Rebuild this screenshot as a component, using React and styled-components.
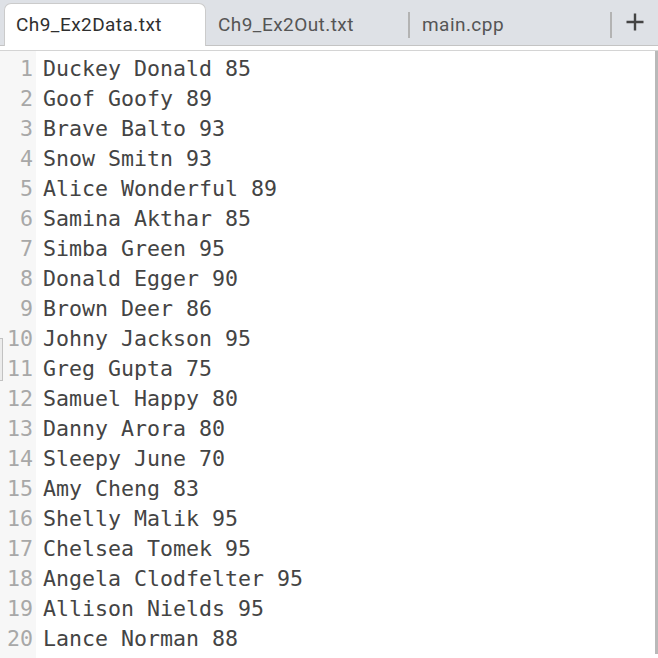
import React from 'react';
import styled, { createGlobalStyle } from 'styled-components';

const GlobalStyle = createGlobalStyle`
  html, body {
    margin: 0;
    padding: 0;
    background: #ffffff;
    overflow: hidden;
  }
`;

const Window = styled.div`
  width: 658px;
  height: 658px;
  display: flex;
  flex-direction: column;
  background: #ffffff;
`;

const TabBar = styled.div`
  height: 46px;
  flex-shrink: 0;
  background: #dee1e6;
  border-bottom: 1px solid #c4c4c4;
  display: flex;
  align-items: flex-end;
  padding-left: 4px;
  box-sizing: border-box;
  font-family: Roboto, "Liberation Sans", sans-serif;
`;

const Tab = styled.div`
  width: ${props => props.width}px;
  box-sizing: border-box;
  display: flex;
  align-items: center;
  padding-left: 11px;
  padding-bottom: 1px;
  font-size: 19px;
  letter-spacing: 0.45px;
  color: ${props => (props.active ? '#2f2f2f' : '#555555')};
  background: ${props => (props.active ? '#ffffff' : 'transparent')};
  border: 1px solid ${props => (props.active ? '#cbcbcb' : 'transparent')};
  border-bottom: none;
  border-radius: 7px 7px 0 0;
  margin-bottom: ${props => (props.active ? '-1px' : '0')};
  height: ${props => (props.active ? 43 : 42)}px;
`;

const Divider = styled.div`
  width: 2px;
  height: 26px;
  background: #b3b3b3;
  align-self: center;
  margin-top: 4px;
  flex-shrink: 0;
`;

const AddButton = styled.div`
  flex: 1;
  height: 46px;
  display: flex;
  align-items: center;
  justify-content: center;
  box-sizing: border-box;
`;

const Gap = styled.div`
  height: 4px;
  flex-shrink: 0;
  border-bottom: 1px solid #d4d4d4;
`;

const Editor = styled.div`
  flex: 1;
  display: flex;
  font-family: "DejaVu Sans Mono", monospace;
  font-size: 21.6px;
  line-height: 30px;
`;

const Gutter = styled.div`
  width: 36px;
  flex-shrink: 0;
  background: #f7f7f7;
  padding-top: 3px;
  position: relative;
`;

const Sash = styled.div`
  position: absolute;
  left: 0;
  top: 287px;
  width: 3px;
  height: 43px;
  box-sizing: border-box;
  border: 1px solid #c2c2c2;
  border-left: none;
  background: #ececec;
`;

const LineNumber = styled.div`
  text-align: right;
  padding-right: 3px;
  color: #a8a8a8;
  height: 30px;
`;

const Lines = styled.div`
  flex: 1;
  padding-top: 3px;
  padding-left: 7px;
  align-self: flex-start;
  border-right: 3px solid #b9b9b9;
`;

const Line = styled.div`
  color: #444444;
  height: 30px;
  white-space: pre;
`;

const rows = [
  'Duckey Donald 85',
  'Goof Goofy 89',
  'Brave Balto 93',
  'Snow Smitn 93',
  'Alice Wonderful 89',
  'Samina Akthar 85',
  'Simba Green 95',
  'Donald Egger 90',
  'Brown Deer 86',
  'Johny Jackson 95',
  'Greg Gupta 75',
  'Samuel Happy 80',
  'Danny Arora 80',
  'Sleepy June 70',
  'Amy Cheng 83',
  'Shelly Malik 95',
  'Chelsea Tomek 95',
  'Angela Clodfelter 95',
  'Allison Nields 95',
  'Lance Norman 88',
];

const App = () => {
  return (
    <>
      <GlobalStyle />
      <Window>
        <TabBar>
          <Tab active width={202}>Ch9_Ex2Data.txt</Tab>
          <Tab width={202}>Ch9_Ex2Out.txt</Tab>
          <Divider />
          <Tab width={200}>main.cpp</Tab>
          <Divider />
          <AddButton>
            <svg width="20" height="20" viewBox="0 0 20 20">
              <path d="M10 1.5v17M1.5 10h17" stroke="#444" strokeWidth="2.4" fill="none" />
            </svg>
          </AddButton>
        </TabBar>
        <Gap />
        <Editor>
          <Gutter>
            <Sash />
            {rows.map((_, i) => (
              <LineNumber key={i}>{i + 1}</LineNumber>
            ))}
          </Gutter>
          <Lines>
            {rows.map((text, i) => (
              <Line key={i}>{text}</Line>
            ))}
          </Lines>
        </Editor>
      </Window>
    </>
  );
};

export default App;
